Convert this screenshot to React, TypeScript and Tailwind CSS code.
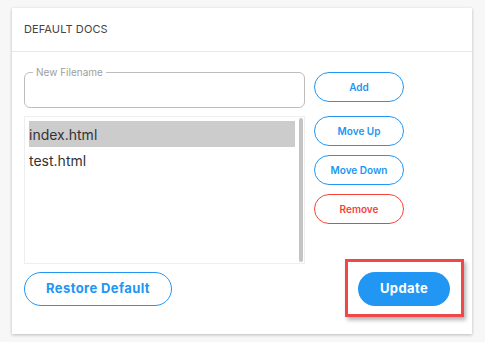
import React from "react";

const font = { fontFamily: "Inter, 'Noto Sans', sans-serif" };

function OutlineBtn({ children, red }: { children: React.ReactNode; red?: boolean }) {
  return (
    <button
      className={
        red
          ? "w-[90px] h-[30px] rounded-full border border-[#f44336] text-[#f44336] text-[10px] font-semibold bg-white"
          : "w-[90px] h-[30px] rounded-full border border-[#2196f3] text-[#2196f3] text-[10px] font-semibold bg-white"
      }
    >
      {children}
    </button>
  );
}

export default function App() {
  return (
    <div className="w-[485px] h-[342px] bg-[#f7f7f7] pt-[8px] pl-[12px]" style={font}>
      <div className="w-[460px] h-[326px] bg-white shadow-[0_1px_3px_rgba(0,0,0,0.25)] flex flex-col">
        <div className="h-[44px] border-b border-[#e8e8e8] flex items-center px-[12px] text-[11px] text-[#444] tracking-[0.01em]">
          DEFAULT DOCS
        </div>
        <div className="flex pl-[12px] pt-[20px]">
          <div className="w-[281px] flex flex-col">
            <div className="relative h-[36px] border border-[#bdbdbd] rounded-[6px]">
              <span className="absolute left-[8px] top-[-7px] bg-white px-[3px] text-[10px] leading-[12px] text-[#9e9e9e]">
                New Filename
              </span>
            </div>
            <div className="mt-[8px] h-[148px] border border-[#eeeeee] flex">
              <div className="flex-1 pl-[4px] pt-[4px] pr-[4px]">
                <div className="h-[26px] bg-[#cccccc] text-[14px] text-[#333] flex items-center">index.html</div>
                <div className="h-[26px] text-[14px] text-[#333] flex items-center">test.html</div>
              </div>
              <div className="w-[4px] mr-[1px] my-[1px] bg-[#c4c4c4] rounded-full" />
            </div>
          </div>
          <div className="ml-[9px] flex flex-col">
            <OutlineBtn>Add</OutlineBtn>
            <div className="mt-[14px] flex flex-col gap-[9px]">
              <OutlineBtn>Move Up</OutlineBtn>
              <OutlineBtn>Move Down</OutlineBtn>
              <OutlineBtn red>Remove</OutlineBtn>
            </div>
          </div>
        </div>
        <div className="flex items-center justify-between pl-[12px] pr-[22px] mt-[8px]">
          <button className="w-[148px] h-[34px] rounded-full border border-[#2196f3] text-[#2196f3] text-[13px] font-bold tracking-[0.03em] bg-white">
            Restore Default
          </button>
          <div className="relative">
            <button className="w-[92px] h-[34px] rounded-full bg-[#2196f3] text-white text-[13px] font-bold tracking-[0.03em]">
              Update
            </button>
            <div className="absolute left-[-13px] top-[-13px] right-[-14px] bottom-[-11px] border-[3px] border-[#f04848] shadow-[2px_3px_4px_rgba(0,0,0,0.3)]" />
          </div>
        </div>
      </div>
    </div>
  );
}
